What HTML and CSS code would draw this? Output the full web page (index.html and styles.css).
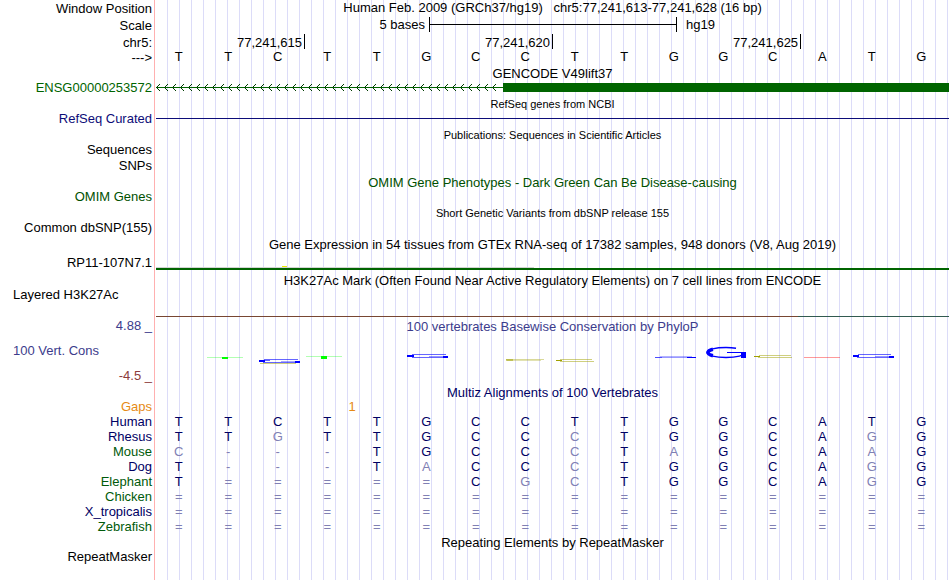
FILE: index.html
```html
<!DOCTYPE html>
<html lang="en">
<head>
    <meta charset="UTF-8">
    <meta name="viewport" content="width=device-width, initial-scale=1.0">
    <title>Human chr5:77,241,613-77,241,628</title>
    <link rel="stylesheet" href="styles.css">
</head>
<body>

<main class="browser">

    <div class="row head">
        <div class="label">Window Position</div>
        <h1 class="data title">Human Feb. 2009 (GRCh37/hg19) &nbsp; chr5:77,241,613-77,241,628 (16 bp)</h1>
    </div>
    <div class="row head">
        <div class="label">Scale</div>
        <div class="data scale">
            <span class="scale-size">5 bases</span>
            <span class="scale-bar"></span>
            <span class="scale-db">hg19</span>
        </div>
    </div>
    <div class="row head">
        <div class="label">chr5:</div>
        <div class="data coords">
            <span>77,241,615</span>
            <span>77,241,620</span>
            <span>77,241,625</span>
        </div>
    </div>
    <div class="row base-row">
        <div class="label">---&gt;</div>
        <div class="data bases" id="bases"></div>
    </div>

    <h2 class="title">GENCODE V49lift37</h2>
    <div class="row">
        <div class="label gene">ENSG00000253572</div>
        <div class="data gene-model">
            <svg class="intron" height="9" aria-hidden="true">
                <defs>
                    <pattern id="strand" width="8" height="9" patternUnits="userSpaceOnUse">
                        <path d="M4 1L0.500 4.500L4 8" fill="none" stroke="#003c00" stroke-width="1"/>
                    </pattern>
                </defs>
                <rect class="intron-line" y="4" width="100%" height="1"/>
                <rect class="arrows" width="100%" height="9" fill="url(#strand)"/>
            </svg>
            <div class="exon"></div>
        </div>
    </div>

    <h2 class="title small">RefSeq genes from NCBI</h2>
    <div class="row">
        <div class="label refseq">RefSeq Curated</div>
        <div class="data"><div class="refseq-line"></div></div>
    </div>

    <h2 class="title small">Publications: Sequences in Scientific Articles</h2>
    <div class="row"><div class="label">Sequences</div></div>
    <div class="row"><div class="label">SNPs</div></div>

    <h2 class="title omim">OMIM Gene Phenotypes - Dark Green Can Be Disease-causing</h2>
    <div class="row"><div class="label omim">OMIM Genes</div></div>

    <h2 class="title small">Short Genetic Variants from dbSNP release 155</h2>
    <div class="row"><div class="label">Common dbSNP(155)</div></div>

    <h2 class="title">Gene Expression in 54 tissues from GTEx RNA-seq of 17382 samples, 948 donors (V8, Aug 2019)</h2>
    <div class="row gtex">
        <div class="label">RP11-107N7.1</div>
        <div class="data">
            <svg class="gtex-graph" viewBox="0 0 793 4" preserveAspectRatio="none" aria-hidden="true">
                <rect x="0" y="1" width="378" height="1" fill="#d3d3d3"/>
                <rect x="126" y="0" width="5" height="1" fill="#eeee00"/>
                <rect x="0" y="2" width="793" height="2" fill="#006400"/>
            </svg>
        </div>
    </div>

    <h2 class="title">H3K27Ac Mark (Often Found Near Active Regulatory Elements) on 7 cell lines from ENCODE</h2>
    <div class="row layered">
        <div class="label left">Layered H3K27Ac</div>
        <div class="data"><div class="h3k27-line"></div></div>
    </div>

    <div class="row cons">
        <div class="label cons-label">
            <span class="cons-max">4.88 _</span>
            <span class="left">100 Vert. Cons</span>
            <span class="cons-min">-4.5 _</span>
        </div>
        <div class="data">
            <h2 class="cons-title">100 vertebrates Basewise Conservation by PhyloP</h2>
            <svg class="phylop" viewBox="0 0 793 40" preserveAspectRatio="none" aria-hidden="true">
                <!-- T -->
                <g fill="#00ff00">
                    <rect x="51" y="23" width="36" height="1" opacity=".3"/>
                    <rect x="66" y="23" width="6" height="2"/>
                    <rect x="150" y="22" width="36" height="1" opacity=".3"/>
                    <rect x="165" y="22" width="6" height="3"/>
                </g>
                <!-- G -->
                <g fill="#0000ff">
                    <rect x="108" y="25" width="34" height="1" opacity=".6"/>
                    <rect x="105" y="26" width="9" height="1" opacity=".6"/>
                    <rect x="103" y="26" width="6" height="2"/>
                    <rect x="125" y="27" width="14" height="1" opacity=".35"/>
                    <rect x="107" y="28" width="34" height="1" opacity=".6"/>
                    <rect x="139" y="27" width="5" height="2"/>

                    <rect x="256" y="20" width="34" height="1" opacity=".6"/>
                    <rect x="251" y="21" width="7" height="2"/>
                    <rect x="273" y="22" width="17" height="1" opacity=".4"/>
                    <rect x="256" y="23" width="32" height="1" opacity=".6"/>
                    <rect x="287" y="22" width="5" height="2"/>

                    <rect x="504" y="22" width="32" height="1" opacity=".3"/>
                    <rect x="499" y="23" width="7" height="1" opacity=".7"/>
                    <rect x="506" y="23" width="25" height="1" opacity=".4"/>
                    <rect x="531" y="23" width="9" height="1"/>

                    <rect x="702" y="20" width="33" height="1" opacity=".6"/>
                    <rect x="697" y="21" width="6" height="2"/>
                    <rect x="719" y="22" width="14" height="1" opacity=".4"/>
                    <rect x="701" y="23" width="32" height="1" opacity=".6"/>
                    <rect x="733" y="22" width="5" height="2"/>

                    <!-- tallest mark, open on the right -->
                    <ellipse cx="570" cy="18.500" rx="19" ry="5" fill="none" stroke="#0000ff" stroke-width="1.300" pathLength="100" stroke-dasharray="87 13"/>
                    <ellipse cx="570" cy="18.500" rx="18" ry="4.800" fill="none" stroke="#0000ff" stroke-width="3.500" pathLength="100" stroke-dasharray="0 42 16 42"/>
                    <rect x="571" y="18" width="19" height="1"/>
                    <rect x="585" y="18" width="5" height="6"/>
                </g>
                <!-- C -->
                <g fill="#a0a000">
                    <rect x="104" y="29" width="36" height="1" opacity=".5"/>
                    <rect x="350" y="25" width="38" height="1" opacity=".4"/>
                    <rect x="351" y="26" width="34" height="1" opacity=".3"/>
                    <rect x="350" y="25" width="7" height="2" opacity=".5"/>

                    <rect x="404" y="25" width="32" height="1" opacity=".5"/>
                    <rect x="400" y="26" width="6" height="1"/>
                    <rect x="404" y="27" width="34" height="1" opacity=".5"/>

                    <rect x="603" y="21" width="32" height="1" opacity=".5"/>
                    <rect x="598" y="22" width="6" height="1"/>
                    <rect x="602" y="23" width="34" height="1" opacity=".5"/>
                </g>
                <!-- A -->
                <rect x="648" y="23" width="36" height="1" fill="#ff0000" opacity=".4"/>
            </svg>
        </div>
    </div>

    <h2 class="title multiz">Multiz Alignments of 100 Vertebrates</h2>
    <table class="alignment">
        <colgroup>
            <col class="name-col">
            <col span="16">
        </colgroup>
        <tbody id="alignment">
            <tr class="gaps">
                <th scope="row">Gaps</th>
                <td colspan="3"></td>
                <td colspan="2">1</td>
                <td colspan="11"></td>
            </tr>
        </tbody>
    </table>

    <h2 class="title">Repeating Elements by RepeatMasker</h2>
    <div class="row"><div class="label">RepeatMasker</div></div>

</main>

<script src="tracks.js"></script>

</body>
</html>
```
FILE: styles.css
```css
body {
    margin: 0;
    background-color: #fff;
    color: #000;
    font-family: "Liberation Sans", Arial, Helvetica, sans-serif;
    font-size: 13px;
    line-height: 13px;
}
h1, h2 {
    margin: 0;
    font-size: 13px;
    font-weight: normal;
}
/* red divider, then a guide line every 12px */
.browser {
    min-height: 100vh;
    box-sizing: border-box;
    padding-right: 1px;
    background-image:
        linear-gradient(to right, #fff 154px, #ffb0b0 154px, #ffb0b0 155px, #fff 155px, #fff 156px, transparent 156px),
        linear-gradient(to right, #dcdcf8 1px, transparent 1px);
    background-size: auto, 12px 100%;
    background-position: 0 0, 11px 0;
}
.row {
    display: flex;
    min-height: 16px;
}
.label {
    flex: none;
    width: 154px;
    box-sizing: border-box;
    padding-right: 2px;
    text-align: right;
    white-space: nowrap;
}
.data {
    flex: 1;
    min-width: 0;
    padding-left: 2px;
}
.title {
    line-height: 15px;
    text-align: center;
    white-space: nowrap;
}
h2.title {
    padding-left: 156px;
}
.small {
    font-size: 11px;
}
.left {
    padding-left: 13px;
    text-align: left;
}
.head {
    min-height: 17px;
}
.head .label {
    line-height: 17px;
}

/* scale and position */
.scale {
    display: grid;
    grid-template-columns: 34.6% 31.2% 1fr;
    padding-left: 0;
    line-height: 15px;
}
.scale-size {
    padding-right: 4px;
    text-align: right;
}
.scale-bar {
    height: 15px;
    box-sizing: border-box;
    border: solid #000;
    border-width: 0 1px;
    background: linear-gradient(#000, #000) 0 7px / 100% 1px no-repeat;
}
.scale-db {
    padding-left: 9px;
}
.coords {
    display: grid;
    grid-template-columns: 19% 31.2% 31.2%;
    padding-left: 0;
    line-height: 17px;
}
.coords span {
    height: 15px;
    padding-right: 2px;
    border-right: 1px solid #000;
    text-align: right;
}
.base-row {
    min-height: 15px;
}
.bases {
    display: grid;
    grid-template-columns: repeat(16, 1fr);
    padding: 0 3px 0 0;
    line-height: 11px;
    text-align: center;
}

/* tracks */
.gene {
    color: #006400;
}
.gene-model {
    display: flex;
    align-items: flex-start;
    padding-top: 2px;
}
.intron {
    flex: none;
    display: block;
    width: 43.8%;
}
.intron-line {
    fill: #006400;
}
.arrows {
    width: calc(100% - 4px);
}
.exon {
    flex: 1;
    height: 9px;
    background-color: #006400;
}
.refseq {
    color: #0c0c78;
}
.refseq-line {
    height: 1px;
    margin-top: 6px;
    background-color: #0c0c78;
}
.omim {
    color: #005000;
}
.gtex {
    min-height: 21px;
}
.gtex .label {
    padding-top: 4px;
}
.gtex-graph {
    display: block;
    width: 100%;
    height: 4px;
    margin-top: 14px;
}
.layered {
    min-height: 31px;
}
.h3k27-line {
    height: 1px;
    margin-top: 28px;
    background: linear-gradient(to right, #784632 81%, #325a50 81%);
}

/* conservation */
.cons {
    color: #3c3c8c;
}
.cons-label {
    display: flex;
    flex-direction: column;
    justify-content: space-between;
    min-height: 66px;
    padding-bottom: 3px;
}
.cons-min {
    color: #8c3c3c;
}
.cons-title {
    line-height: 15px;
    text-align: center;
}
.phylop {
    display: block;
    width: 100%;
    height: 40px;
}

/* alignment */
.multiz {
    color: #000064;
}
.alignment {
    width: calc(100% - 3px);
    table-layout: fixed;
    border-collapse: collapse;
    color: #000064;
}
.name-col {
    width: 154px;
}
.alignment th,
.alignment td {
    height: 15px;
    padding: 0;
    vertical-align: top;
    font-weight: normal;
    text-align: center;
}
.alignment th {
    padding-right: 2px;
    text-align: right;
}
.alignment .gaps {
    color: #e68a14;
}
.alignment .alt {
    color: #005a0a;
}
.alignment .diff {
    color: #8080b4;
}
```
FILE: tracks.js
```js
const reference = 'TTCTTGCCTTGGCATG';

const species = [
    ['Human', 'TTCTTGCCTTGGCATG'],
    ['Rhesus', 'TTGTTGCCCTGGCAGG'],
    ['Mouse', 'C---TGCCCTAGCAAG'],
    ['Dog', 'T---TACCCTGGCAGG'],
    ['Elephant', 'T=====CGCTGGCAGG'],
    ['Chicken', '================'],
    ['X_tropicalis', '================'],
    ['Zebrafish', '================']
];

// these names are drawn in green
const green = ['Mouse', 'Elephant', 'Chicken', 'Zebrafish'];

const bases = document.getElementById('bases');
for (const base of reference) {
    const span = document.createElement('span');
    span.textContent = base;
    bases.appendChild(span);
}

const body = document.getElementById('alignment');
for (const [name, sequence] of species) {
    const row = body.insertRow();
    const th = document.createElement('th');
    th.scope = 'row';
    th.textContent = name;
    if (green.includes(name)) {
        th.className = 'alt';
    }
    row.appendChild(th);

    for (let i = 0; i < sequence.length; i++) {
        const cell = row.insertCell();
        cell.textContent = sequence[i];
        if (sequence[i] !== reference[i]) {
            cell.className = 'diff';
        }
    }
}
```
